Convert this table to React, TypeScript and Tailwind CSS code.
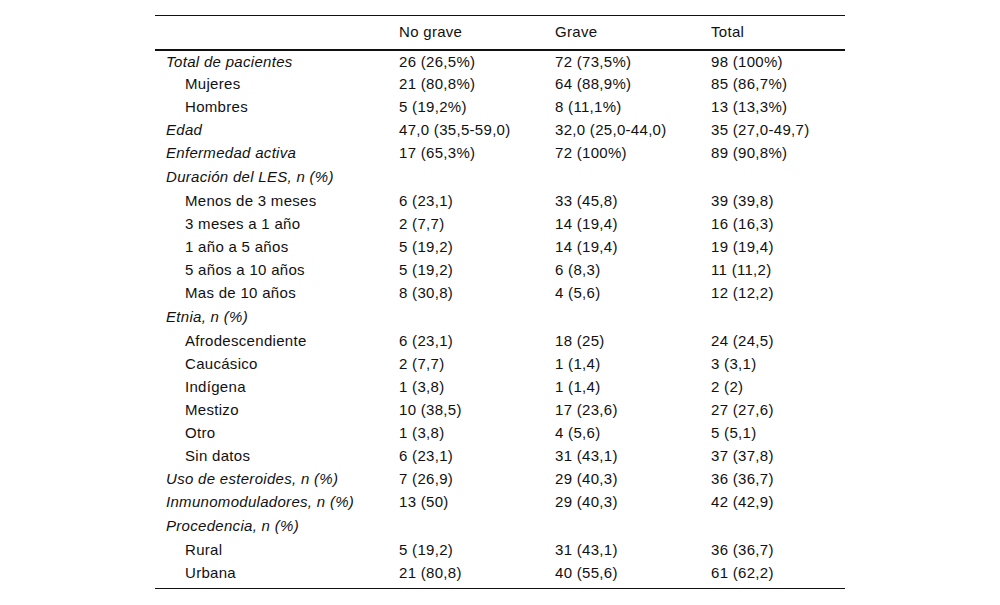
type Row = { label: string; kind: "head" | "sub" | "group"; values?: [string, string, string] };

const rows: Row[] = [
  { label: "Total de pacientes", kind: "head", values: ["26 (26,5%)", "72 (73,5%)", "98 (100%)"] },
  { label: "Mujeres", kind: "sub", values: ["21 (80,8%)", "64 (88,9%)", "85 (86,7%)"] },
  { label: "Hombres", kind: "sub", values: ["5 (19,2%)", "8 (11,1%)", "13 (13,3%)"] },
  { label: "Edad", kind: "head", values: ["47,0 (35,5-59,0)", "32,0 (25,0-44,0)", "35 (27,0-49,7)"] },
  { label: "Enfermedad activa", kind: "head", values: ["17 (65,3%)", "72 (100%)", "89 (90,8%)"] },
  { label: "Duración del LES, n (%)", kind: "group" },
  { label: "Menos de 3 meses", kind: "sub", values: ["6 (23,1)", "33 (45,8)", "39 (39,8)"] },
  { label: "3 meses a 1 año", kind: "sub", values: ["2 (7,7)", "14 (19,4)", "16 (16,3)"] },
  { label: "1 año a 5 años", kind: "sub", values: ["5 (19,2)", "14 (19,4)", "19 (19,4)"] },
  { label: "5 años a 10 años", kind: "sub", values: ["5 (19,2)", "6 (8,3)", "11 (11,2)"] },
  { label: "Mas de 10 años", kind: "sub", values: ["8 (30,8)", "4 (5,6)", "12 (12,2)"] },
  { label: "Etnia, n (%)", kind: "group" },
  { label: "Afrodescendiente", kind: "sub", values: ["6 (23,1)", "18 (25)", "24 (24,5)"] },
  { label: "Caucásico", kind: "sub", values: ["2 (7,7)", "1 (1,4)", "3 (3,1)"] },
  { label: "Indígena", kind: "sub", values: ["1 (3,8)", "1 (1,4)", "2 (2)"] },
  { label: "Mestizo", kind: "sub", values: ["10 (38,5)", "17 (23,6)", "27 (27,6)"] },
  { label: "Otro", kind: "sub", values: ["1 (3,8)", "4 (5,6)", "5 (5,1)"] },
  { label: "Sin datos", kind: "sub", values: ["6 (23,1)", "31 (43,1)", "37 (37,8)"] },
  { label: "Uso de esteroides, n (%)", kind: "head", values: ["7 (26,9)", "29 (40,3)", "36 (36,7)"] },
  { label: "Inmunomoduladores, n (%)", kind: "head", values: ["13 (50)", "29 (40,3)", "42 (42,9)"] },
  { label: "Procedencia, n (%)", kind: "group" },
  { label: "Rural", kind: "sub", values: ["5 (19,2)", "31 (43,1)", "36 (36,7)"] },
  { label: "Urbana", kind: "sub", values: ["21 (80,8)", "40 (55,6)", "61 (62,2)"] },
];

export default function App() {
  return (
    <div className="min-h-[605px] bg-white pt-[15px] text-[15px] leading-[18px] tracking-[0.3px] text-[#111] [font-family:'Liberation_Sans',Arial,sans-serif]">
      <table className="mx-auto w-[690px] table-fixed border-collapse">
        <colgroup>
          <col className="w-[234px]" />
          <col className="w-[156px]" />
          <col className="w-[156px]" />
          <col className="w-[144px]" />
        </colgroup>
        <thead>
          <tr className="h-[34px] border-t border-b-2 border-[#111]">
            <th className="pl-[11px]" />
            <th className="pl-[10px] text-left font-normal">No grave</th>
            <th className="pl-[10px] text-left font-normal">Grave</th>
            <th className="pl-[10px] text-left font-normal">Total</th>
          </tr>
        </thead>
        <tbody className="border-b border-[#111]">
          {rows.map((r, idx) => {
            const last = idx === rows.length - 1;
            const h = r.kind === "group" ? "h-[25px]" : last ? "h-[27px]" : "h-[23px]";
            const pad = last ? "pb-[4px]" : "";
            return (
              <tr key={r.label} className={h}>
                <td className={`${r.kind === "sub" ? "pl-[30px]" : "pl-[11px] italic"} ${pad}`}>{r.label}</td>
                {r.values ? (
                  r.values.map((v, i) => (
                    <td key={i} className={`pl-[10px] ${pad}`}>
                      {v}
                    </td>
                  ))
                ) : (
                  <td colSpan={3} />
                )}
              </tr>
            );
          })}
        </tbody>
      </table>
    </div>
  );
}
